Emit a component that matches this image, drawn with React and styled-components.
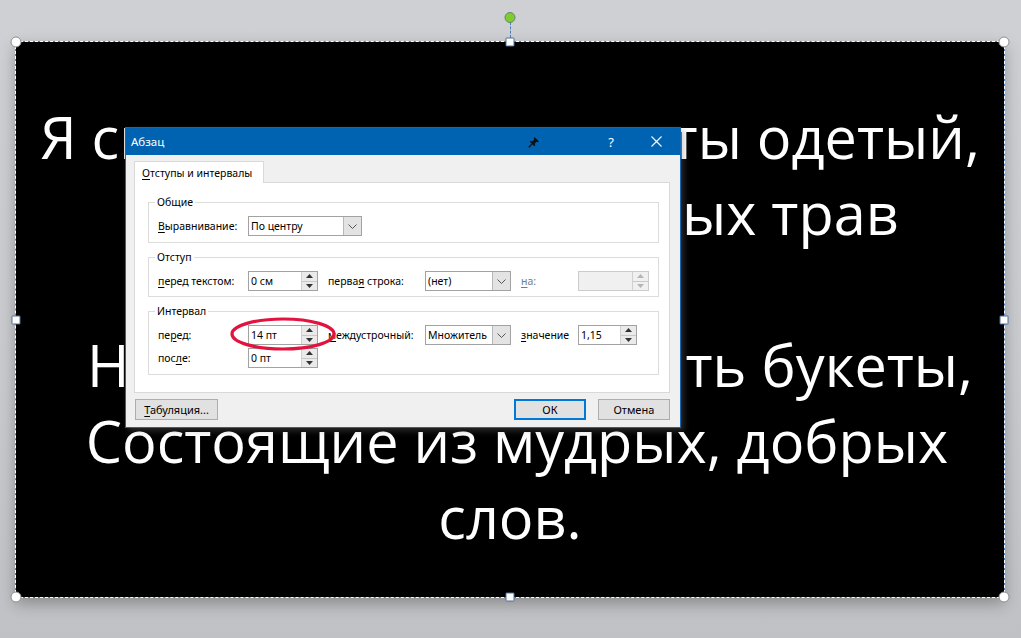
import React from 'react';
import styled, { createGlobalStyle } from 'styled-components';

const GlobalStyle = createGlobalStyle`
  html, body {
    margin: 0;
    padding: 0;
    background: #c8c9cc;
  }
  * { box-sizing: border-box; }
`;

const poem = [
  { text: 'Я смотрю на луг, в цветы одетый,' },
  { text: 'Из лугов и лесных трав', shift: 62 },
  { text: '\u00a0' },
  { text: 'Нам бы вместе собрать букеты,', shift: 20 },
  { text: 'Состоящие из мудрых, добрых', shift: 7 },
  { text: 'слов.' },
];

const Page = styled.div`
  position: relative;
  width: 1021px;
  height: 638px;
  overflow: hidden;
  padding: 41px 0 0 15px;
  background: linear-gradient(#cfd0d3, #c9cacd 60%, #c0c1c4);
`;

const Slide = styled.div`
  position: relative;
  width: 990px;
  height: 557px;
  background: #000;
  border: 1px solid #4f7db5;
  box-shadow: 0 6px 14px rgba(0, 0, 0, 0.28);
  padding-top: 57px;

  &::after {
    content: '';
    position: absolute;
    inset: -1px;
    border: 1px dashed #ffffff;
    pointer-events: none;
  }
`;

const Line = styled.div`
  font-family: 'Open Sans', 'Noto Sans', sans-serif;
  font-size: 57.6px;
  line-height: 76px;
  color: #fff;
  text-align: center;
  white-space: nowrap;
  padding-left: ${(p) => Math.max(p.$shift || 0, 0) * 2}px;
  padding-right: ${(p) => Math.max(-(p.$shift || 0), 0) * 2}px;
`;

const spots = { start: '0%', mid: '50%', end: '100%' };

const Handle = styled.span`
  position: absolute;
  z-index: 2;
  left: ${(p) => spots[p.$h]};
  top: ${(p) => spots[p.$v]};
  width: ${(p) => (p.$square ? 9 : 11)}px;
  height: ${(p) => (p.$square ? 9 : 11)}px;
  transform: translate(-50%, -50%);
  background: #fff;
  border: 1px solid ${(p) => (p.$square ? '#4d6f98' : '#8d8d8d')};
  border-radius: ${(p) => (p.$square ? '1px' : '50%')};
`;

const RotateStem = styled.span`
  position: absolute;
  left: 50%;
  top: -20px;
  height: 16px;
  border-left: 1px dashed #4f7db5;
`;

const RotateKnob = styled.span`
  position: absolute;
  left: 50%;
  top: -30px;
  width: 11px;
  height: 11px;
  transform: translateX(-50%);
  border-radius: 50%;
  background: #7dce2c;
  border: 1px solid #66856a;
`;

const Dialog = styled.div`
  position: absolute;
  left: 125px;
  top: 127px;
  width: 556px;
  height: 301px;
  display: flex;
  flex-direction: column;
  background: #f0f0f0;
  border: 1px solid #1a67ae;
  box-shadow: 3px 3px 6px rgba(120, 120, 120, 0.35);
  font-family: 'Noto Sans', 'Open Sans', sans-serif;
  font-size: 10.5px;
  color: #000;
  z-index: 3;
`;

const TitleBar = styled.div`
  height: 27px;
  flex: none;
  display: flex;
  align-items: center;
  background: #0063b1;
  color: #fff;
  padding-left: 5px;
  font-size: 11.5px;
`;

const TitleText = styled.span`
  flex: 1;
`;

const TitleButton = styled.span`
  width: ${(p) => p.$w}px;
  margin-right: ${(p) => p.$mr || 0}px;
  height: 27px;
  display: flex;
  align-items: center;
  justify-content: center;
  font-size: 13px;
`;

const Body = styled.div`
  flex: 1;
  display: flex;
  flex-direction: column;
  padding: 6px 10px 0 8px;
`;

const Tab = styled.div`
  align-self: flex-start;
  height: 22px;
  width: 130px;
  padding: 4px 0 0 7px;
  background: #fff;
  border: 1px solid #d9d9d9;
  border-bottom: none;
  margin-bottom: -1px;
  position: relative;
  z-index: 1;
  white-space: nowrap;
`;

const Panel = styled.div`
  height: 211px;
  background: #fff;
  border: 1px solid #d9d9d9;
  padding: 19px 10px 0 13px;
  display: flex;
  flex-direction: column;
  gap: 14px;
`;

const Group = styled.div`
  border: 1px solid #dcdcdc;
  padding: 0 0 ${(p) => p.$pb}px 9px;
`;

const GroupTitle = styled.div`
  width: fit-content;
  margin: -8px 0 0 -3px;
  padding: 0 2px;
  line-height: 15px;
  background: #fff;
`;

const Row = styled.div`
  display: grid;
  grid-template-columns: 90px 70px 10px 97px 86px 10px 57px auto;
  align-items: center;
  height: 20px;
  margin-top: ${(p) => p.$mt}px;
  white-space: nowrap;
`;

const Label = styled.span`
  grid-column: ${(p) => p.$col};
  color: ${(p) => (p.$muted ? '#6f7d8c' : '#000')};
`;

const Key = styled.span`
  text-decoration: underline;
  text-underline-offset: 2px;
`;

const Field = styled.div`
  grid-column: ${(p) => p.$col};
  width: ${(p) => p.$w}px;
  height: 20px;
  display: flex;
  border: 1px solid ${(p) => (p.$disabled ? '#cccccc' : '#a2a2a2')};
  background: ${(p) => (p.$disabled ? '#f0f0f0' : '#fff')};
`;

const FieldValue = styled.span`
  flex: 1;
  padding-left: 2px;
  display: flex;
  align-items: center;
  overflow: hidden;
`;

const Spinner = styled.div`
  width: 16px;
  display: flex;
  flex-direction: column;
  background: ${(p) => (p.$disabled ? '#f0f0f0' : '#eaeaea')};
  border-left: 1px solid #d0d0d0;
`;

const SpinHalf = styled.span`
  flex: 1;
  display: flex;
  align-items: center;
  justify-content: center;
  border-top: ${(p) => (p.$down ? '1px solid #c8c8c8' : 'none')};
`;

const DropButton = styled.div`
  width: 18px;
  flex: none;
  display: flex;
  align-items: center;
  justify-content: center;
  background: #e3e3e3;
  border-left: 1px solid #b8b8b8;
`;

const Footer = styled.div`
  display: flex;
  align-items: center;
  margin-top: 6px;
  padding-left: 1px;
`;

const Button = styled.button`
  width: ${(p) => p.$w}px;
  height: 21px;
  margin-left: ${(p) => p.$ml || 0}px;
  padding: 0;
  font: inherit;
  font-size: 11px;
  color: #000;
  background: #e1e1e1;
  border: ${(p) => (p.$primary ? '2px solid #0078d7' : '1px solid #adadad')};
`;

const Highlight = styled.svg`
  position: absolute;
  left: 229px;
  top: 316px;
  z-index: 4;
  pointer-events: none;
`;

const Arrow = ({ up, disabled }) => (
  <svg width="7" height="4" viewBox="0 0 7 4">
    <path d={up ? 'M0 4 L3.5 0 L7 4 Z' : 'M0 0 L3.5 4 L7 0 Z'} fill={disabled ? '#b5b5b5' : '#333'} />
  </svg>
);

const Spin = ({ disabled }) => (
  <Spinner $disabled={disabled}>
    <SpinHalf><Arrow up disabled={disabled} /></SpinHalf>
    <SpinHalf $down><Arrow disabled={disabled} /></SpinHalf>
  </Spinner>
);

const Chevron = () => (
  <svg width="9" height="5" viewBox="0 0 9 5">
    <path d="M0.5 0.5 L4.5 4.5 L8.5 0.5" fill="none" stroke="#555" strokeWidth="1" />
  </svg>
);

const NumberBox = ({ col, w, value, disabled }) => (
  <Field $col={col} $w={w} $disabled={disabled}>
    <FieldValue>{value}</FieldValue>
    <Spin disabled={disabled} />
  </Field>
);

const Combo = ({ col, w, value }) => (
  <Field $col={col} $w={w}>
    <FieldValue>{value}</FieldValue>
    <DropButton><Chevron /></DropButton>
  </Field>
);

const PinIcon = () => (
  <svg width="12" height="12" viewBox="0 0 12 12">
    <path d="M6.5 1 L11 5.5 L9.8 6.2 L8.6 5.8 L6.8 7.6 L7.2 9.4 L6.3 10.3 L1.7 5.7 L2.6 4.8 L4.4 5.2 L6.2 3.4 L5.8 2.2 Z" fill="#111" />
    <path d="M4 8 L0.8 11.2" stroke="#111" strokeWidth="1.3" />
  </svg>
);

const CloseIcon = () => (
  <svg width="11" height="11" viewBox="0 0 11 11">
    <path d="M0.5 0.5 L10.5 10.5 M10.5 0.5 L0.5 10.5" stroke="#fff" strokeWidth="1.1" />
  </svg>
);

const App = () => {
  return (
    <>
      <GlobalStyle />
      <Page>
        <Slide>
          {poem.map((l, i) => (
            <Line key={i} $shift={l.shift}>{l.text}</Line>
          ))}
          <RotateStem />
          <RotateKnob />
          <Handle $h="start" $v="start" />
          <Handle $h="mid" $v="start" $square />
          <Handle $h="end" $v="start" />
          <Handle $h="start" $v="mid" $square />
          <Handle $h="end" $v="mid" $square />
          <Handle $h="start" $v="end" />
          <Handle $h="mid" $v="end" $square />
          <Handle $h="end" $v="end" />
        </Slide>

        <Dialog>
          <TitleBar>
            <TitleText>Абзац</TitleText>
            <TitleButton $w={30} $mr={47}><PinIcon /></TitleButton>
            <TitleButton $w={30} $mr={6}>?</TitleButton>
            <TitleButton $w={48}><CloseIcon /></TitleButton>
          </TitleBar>
          <Body>
            <Tab><Key>О</Key>тступы и интервалы</Tab>
            <Panel>
              <Group $pb={6}>
                <GroupTitle>Общие</GroupTitle>
                <Row $mt={6}>
                  <Label $col={1}><Key>В</Key>ыравнивание:</Label>
                  <Field $col="2 / span 4" $w={114}>
                    <FieldValue>По центру</FieldValue>
                    <DropButton><Chevron /></DropButton>
                  </Field>
                </Row>
              </Group>

              <Group $pb={5}>
                <GroupTitle>Отступ</GroupTitle>
                <Row $mt={6}>
                  <Label $col={1}><Key>п</Key>еред текстом:</Label>
                  <NumberBox col={2} w={70} value="0 см" />
                  <Label $col={4}>перва<Key>я</Key> строка:</Label>
                  <Combo col={5} w={86} value="(нет)" />
                  <Label $col={7} $muted><Key>н</Key>а:</Label>
                  <NumberBox col={8} w={71} value="" disabled />
                </Row>
              </Group>

              <Group $pb={6}>
                <GroupTitle>Интервал</GroupTitle>
                <Row $mt={6}>
                  <Label $col={1}>пе<Key>р</Key>ед:</Label>
                  <NumberBox col={2} w={70} value="14 пт" />
                  <Label $col={4}><Key>м</Key>еждустрочный:</Label>
                  <Combo col={5} w={86} value="Множитель" />
                  <Label $col={7}><Key>з</Key>начение</Label>
                  <NumberBox col={8} w={59} value="1,15" />
                </Row>
                <Row $mt={3}>
                  <Label $col={1}>пос<Key>л</Key>е:</Label>
                  <NumberBox col={2} w={70} value="0 пт" />
                </Row>
              </Group>
            </Panel>
            <Footer>
              <Button $w={84}><Key>Т</Key>абуляция...</Button>
              <Button $w={72} $ml={296} $primary>ОК</Button>
              <Button $w={73} $ml={12}>Отмена</Button>
            </Footer>
          </Body>
        </Dialog>

        <Highlight width="108" height="36" viewBox="0 0 108 36">
          <ellipse cx="54" cy="18" rx="51" ry="15" fill="none" stroke="#e2143f" strokeWidth="3.2" />
        </Highlight>
      </Page>
    </>
  );
};

export default App;
